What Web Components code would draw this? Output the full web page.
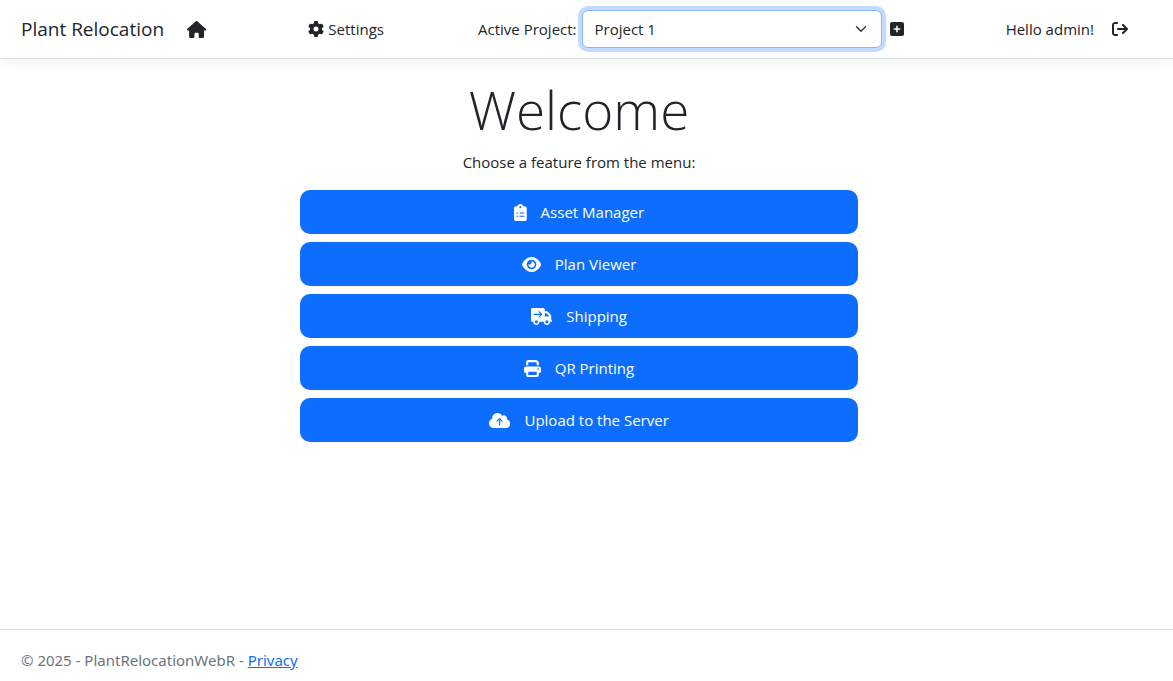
<!DOCTYPE html>
<html lang="en">
<head>
<meta charset="utf-8">
<meta name="viewport" content="width=device-width, initial-scale=1">
<title>Plant Relocation</title>
<style>
  body {
    margin: 0;
    background: #fff;
    color: #212529;
    font: 15px/24px "Segoe UI", "Open Sans", "Noto Sans", sans-serif;
  }
</style>
</head>
<body>
<pr-app></pr-app>

<template id="t-app">
  <style>
    :host { display: flex; flex-direction: column; min-height: 100vh; }
    pr-main { flex: 1; }
  </style>
  <pr-header></pr-header>
  <pr-main>
    <pr-feature icon="clipboard" href="#assets">Asset Manager</pr-feature>
    <pr-feature icon="eye" href="#plans">Plan Viewer</pr-feature>
    <pr-feature icon="truck" href="#shipping">Shipping</pr-feature>
    <pr-feature icon="print" href="#qr">QR Printing</pr-feature>
    <pr-feature icon="cloud" href="#upload">Upload to the Server</pr-feature>
  </pr-main>
  <pr-footer></pr-footer>
</template>

<template id="t-header">
  <style>
    :host {
      display: block;
      border-bottom: 1px solid #dee2e6;
      box-shadow: 0 4px 12px rgba(0, 0, 0, .05);
    }
    nav {
      display: flex;
      align-items: center;
      justify-content: space-between;
      padding: 10px 45px 10px 21px;
    }
    a { color: inherit; text-decoration: none; }
    .group { display: flex; align-items: center; }
    .brand { font-size: 19px; line-height: 30px; }
    .home { display: flex; padding: 0 8px 0 23px; }
    .home pr-icon { --icon-size: 17px; }
    .settings { display: flex; align-items: center; gap: 4px; }
    .user { gap: 18px; }
    label { margin-right: 5px; }
    select {
      appearance: none;
      box-sizing: border-box;
      width: 300px;
      height: 38px;
      margin: 0;
      padding: 0 36px 0 12px;
      border: 1px solid #86b7fe;
      border-radius: 6px;
      outline: 0;
      box-shadow: 0 0 0 4px rgba(13, 110, 253, .25);
      color: inherit;
      font: inherit;
      background: #fff url("data:image/svg+xml,%3Csvg xmlns='http://www.w3.org/2000/svg' viewBox='0 0 16 16'%3E%3Cpath fill='none' stroke='%23343a40' stroke-linecap='round' stroke-linejoin='round' stroke-width='2' d='m2 5 6 6 6-6'/%3E%3C/svg%3E") no-repeat right 14px center / 12px 12px;
    }
    button {
      display: flex;
      margin: 0;
      padding: 0 8px;
      border: 0;
      background: none;
      color: inherit;
      font: inherit;
    }
  </style>
  <nav>
    <div class="group">
      <a class="brand" href="#home">Plant Relocation</a>
      <a class="home" href="#home" aria-label="Home"><pr-icon name="home"></pr-icon></a>
    </div>
    <a class="settings" href="#settings"><pr-icon name="gear"></pr-icon><span>Settings</span></a>
    <div class="group">
      <label for="project">Active Project:</label>
      <select id="project"><option>Project 1</option></select>
      <button type="button" aria-label="Add project"><pr-icon name="plus"></pr-icon></button>
    </div>
    <div class="group user">
      <span>Hello admin!</span>
      <a class="group" href="#logout" aria-label="Log out"><pr-icon name="logout"></pr-icon></a>
    </div>
  </nav>
</template>

<template id="t-main">
  <style>
    :host { display: block; padding: 19px 15px 16px 0; text-align: center; }
    h1 { margin: 0 0 8px; font-size: 53px; line-height: 64px; font-weight: 300; }
    p { margin: 0 0 16px; }
    .menu {
      display: flex;
      flex-direction: column;
      gap: 8px;
      width: calc(50% - 21px);
      margin: 0 auto;
    }
  </style>
  <h1>Welcome</h1>
  <p>Choose a feature from the menu:</p>
  <div class="menu"><slot></slot></div>
</template>

<template id="t-feature">
  <style>
    :host { display: block; }
    a {
      display: flex;
      align-items: center;
      justify-content: center;
      gap: 14px;
      padding: 10px 16px;
      border-radius: 10px;
      background: #0d6efd;
      color: #fff;
      text-decoration: none;
    }
    pr-icon { --icon-size: 17px; }
  </style>
  <a><pr-icon></pr-icon><span><slot></slot></span></a>
</template>

<template id="t-footer">
  <style>
    :host {
      display: block;
      padding: 18px 21px 9px;
      border-top: 1px solid #dee2e6;
      color: #6c757d;
      font-family: "Segoe UI", "Noto Sans", sans-serif;
    }
    a { color: #0d6efd; }
  </style>
  <span>© 2025 - PlantRelocationWebR - <a href="#privacy">Privacy</a></span>
</template>

<script>
  const ICONS = {
    home: [576, "M575.8 255.5c0 18-15 32.1-32 32.1h-32l.7 160.2c0 2.7-.2 5.4-.5 8.1V472c0 22.1-17.9 40-40 40H456c-1.1 0-2.2 0-3.3-.1c-1.4 .1-2.8 .1-4.2 .1H416 392c-22.1 0-40-17.9-40-40V448 384c0-17.7-14.3-32-32-32H256c-17.7 0-32 14.3-32 32v64 24c0 22.1-17.9 40-40 40H160 128.1c-1.5 0-3-.1-4.5-.2c-1.2 .1-2.4 .2-3.6 .2H104c-22.1 0-40-17.9-40-40V360c0-.9 0-1.9 .1-2.8V287.6H32c-18 0-32-14-32-32.1c0-9 3-17 10-24L266.4 8c7-7 15-8 22-8s15 2 21 7L564.8 231.5c8 7 12 15 11 24z"],
    gear: [512, "M495.9 166.6c3.2 8.7 .5 18.4-6.4 24.6l-43.3 39.4c1.1 8.3 1.7 16.8 1.7 25.4s-.6 17.1-1.7 25.4l43.3 39.4c6.9 6.2 9.6 15.9 6.4 24.6c-4.4 11.9-9.7 23.3-15.8 34.3l-4.7 8.1c-6.6 11-14 21.4-22.1 31.2c-5.9 7.2-15.7 9.6-24.5 6.8l-55.7-17.7c-13.4 10.3-28.2 18.9-44 25.4l-12.5 57.1c-2 9.1-9 16.3-18.2 17.8c-13.8 2.3-28 3.5-42.5 3.5s-28.7-1.2-42.5-3.5c-9.2-1.5-16.2-8.7-18.2-17.8l-12.5-57.1c-15.8-6.5-30.6-15.1-44-25.4L83.1 425.9c-8.8 2.8-18.6 .3-24.5-6.8c-8.1-9.8-15.5-20.2-22.1-31.2l-4.7-8.1c-6.1-11-11.4-22.4-15.8-34.3c-3.2-8.7-.5-18.4 6.4-24.6l43.3-39.4C64.6 273.1 64 264.6 64 256s.6-17.1 1.7-25.4L22.4 191.2c-6.9-6.2-9.6-15.9-6.4-24.6c4.4-11.9 9.7-23.3 15.8-34.3l4.7-8.1c6.6-11 14-21.4 22.1-31.2c5.9-7.2 15.7-9.6 24.5-6.8l55.7 17.7c13.4-10.3 28.2-18.9 44-25.4l12.5-57.1c2-9.1 9-16.3 18.2-17.8C227.3 1.2 241.5 0 256 0s28.7 1.2 42.5 3.5c9.2 1.5 16.2 8.7 18.2 17.8l12.5 57.1c15.8 6.5 30.6 15.1 44 25.4l55.7-17.7c8.8-2.8 18.6-.3 24.5 6.8c8.1 9.8 15.5 20.2 22.1 31.2l4.7 8.1c6.1 11 11.4 22.4 15.8 34.3zM256 336a80 80 0 1 0 0-160 80 80 0 1 0 0 160z"],
    plus: [448, "M64 32C28.7 32 0 60.7 0 96V416c0 35.3 28.7 64 64 64H384c35.3 0 64-28.7 64-64V96c0-35.3-28.7-64-64-64H64zM200 344V280H136c-13.3 0-24-10.7-24-24s10.7-24 24-24h64V168c0-13.3 10.7-24 24-24s24 10.7 24 24v64h64c13.3 0 24 10.7 24 24s-10.7 24-24 24H248v64c0 13.3-10.7 24-24 24s-24-10.7-24-24z"],
    logout: [512, "M502.6 278.6c12.5-12.5 12.5-32.8 0-45.3l-128-128c-12.5-12.5-32.8-12.5-45.3 0s-12.5 32.8 0 45.3L402.7 224 192 224c-17.7 0-32 14.3-32 32s14.3 32 32 32l210.7 0-73.4 73.4c-12.5 12.5-12.5 32.8 0 45.3s32.8 12.5 45.3 0l128-128zM160 96c17.7 0 32-14.3 32-32s-14.3-32-32-32L96 32C43 32 0 75 0 128L0 384c0 53 43 96 96 96l64 0c17.7 0 32-14.3 32-32s-14.3-32-32-32l-64 0c-17.7 0-32-14.3-32-32l0-256c0-17.7 14.3-32 32-32l64 0z"],
    clipboard: [384, "M192 0c-41.8 0-77.4 26.7-90.5 64H64C28.7 64 0 92.7 0 128V448c0 35.3 28.7 64 64 64H320c35.3 0 64-28.7 64-64V128c0-35.3-28.7-64-64-64H282.5C269.4 26.7 233.8 0 192 0zm0 64a32 32 0 1 1 0 64 32 32 0 1 1 0-64zM72 272a24 24 0 1 1 48 0 24 24 0 1 1 -48 0zm104-16H304c8.8 0 16 7.2 16 16s-7.2 16-16 16H176c-8.8 0-16-7.2-16-16s7.2-16 16-16zM72 368a24 24 0 1 1 48 0 24 24 0 1 1 -48 0zm88 0c0-8.8 7.2-16 16-16H304c8.8 0 16 7.2 16 16s-7.2 16-16 16H176c-8.8 0-16-7.2-16-16z"],
    eye: [576, "M288 32c-80.8 0-145.5 36.8-192.6 80.6C48.6 156 17.3 208 2.5 243.7c-3.3 7.9-3.3 16.7 0 24.6C17.3 304 48.6 356 95.4 399.4C142.5 443.2 207.2 480 288 480s145.5-36.8 192.6-80.6c46.8-43.5 78.1-95.4 93-131.1c3.3-7.9 3.3-16.7 0-24.6c-14.9-35.7-46.2-87.7-93-131.1C433.5 68.8 368.8 32 288 32zM144 256a144 144 0 1 1 288 0 144 144 0 1 1 -288 0zm144-64c0 35.3-28.7 64-64 64c-7.1 0-13.9-1.2-20.3-3.3c-5.5-1.8-11.9 1.6-11.7 7.4c.3 6.9 1.3 13.8 3.2 20.7c13.7 51.2 66.4 81.6 117.6 67.9s81.6-66.4 67.9-117.6c-11.1-41.5-47.8-69.4-88.6-71.1c-5.8-.2-9.2 6.1-7.4 11.7c2.1 6.4 3.3 13.2 3.3 20.3z"],
    truck: [640, "M0 48C0 21.5 21.5 0 48 0H368c26.5 0 48 21.5 48 48V96h50.7c17 0 33.3 6.7 45.3 18.7L589.3 192c12 12 18.7 28.3 18.7 45.3V256v32 64c17.7 0 32 14.3 32 32s-14.3 32-32 32H576c0 53-43 96-96 96s-96-43-96-96H256c0 53-43 96-96 96s-96-43-96-96H48c-26.5 0-48-21.5-48-48V48zM416 256H544V237.3L466.7 160H416v96zM160 464a48 48 0 1 0 0-96 48 48 0 1 0 0 96zm368-48a48 48 0 1 0 -96 0 48 48 0 1 0 96 0zM252 100a17 17 0 0 0-24 24L279 175H96a17 17 0 0 0 0 34H279L228 260a17 17 0 0 0 24 24L332 204a17 17 0 0 0 0-24z"],
    print: [512, "M128 0C92.7 0 64 28.7 64 64v96h64V64H354.7L384 93.3V160h64V93.3c0-17-6.7-33.3-18.7-45.3L400 18.7C388 6.7 371.7 0 354.7 0H128zM384 352v32 64H128V384 368 352H384zm64 32h32c17.7 0 32-14.3 32-32V256c0-35.3-28.7-64-64-64H64c-35.3 0-64 28.7-64 64v96c0 17.7 14.3 32 32 32H64v64c0 35.3 28.7 64 64 64H384c35.3 0 64-28.7 64-64V384zM432 248a24 24 0 1 1 0 48 24 24 0 1 1 0-48z"],
    cloud: [640, "M144 480C64.5 480 0 415.5 0 336c0-62.8 40.2-116.2 96.2-135.9c-.1-2.7-.2-5.4-.2-8.1c0-88.4 71.6-160 160-160c59.3 0 111 32.2 138.7 80.2C409.9 102 428.3 96 448 96c53 0 96 43 96 96c0 12.2-2.3 23.8-6.4 34.6C596 238.4 640 290.1 640 352c0 70.7-57.3 128-128 128H144zM228 268a17 17 0 0 0 24 24L303 241V392a17 17 0 0 0 34 0V241L388 292a17 17 0 0 0 24-24L332 188a17 17 0 0 0-24 0z"]
  };

  class TemplateElement extends HTMLElement {
    constructor() {
      super();
      const template = document.getElementById(this.constructor.template);
      this.attachShadow({ mode: "open" }).append(template.content.cloneNode(true));
    }
  }

  class PrIcon extends HTMLElement {
    static observedAttributes = ["name"];
    constructor() {
      super();
      this.attachShadow({ mode: "open" });
    }
    attributeChangedCallback() {
      const [width, path] = ICONS[this.getAttribute("name")];
      this.shadowRoot.innerHTML = `
        <style>
          :host { display: inline-flex; }
          svg { display: block; height: var(--icon-size, 16px); width: auto; fill: currentColor; }
        </style>
        <svg viewBox="0 0 ${width} 512" aria-hidden="true"><path fill-rule="evenodd" d="${path}"/></svg>`;
    }
  }

  class PrFeature extends TemplateElement {
    static template = "t-feature";
    connectedCallback() {
      this.shadowRoot.querySelector("a").href = this.getAttribute("href");
      this.shadowRoot.querySelector("pr-icon").setAttribute("name", this.getAttribute("icon"));
    }
  }

  customElements.define("pr-icon", PrIcon);
  customElements.define("pr-feature", PrFeature);
  customElements.define("pr-header", class extends TemplateElement { static template = "t-header"; });
  customElements.define("pr-main", class extends TemplateElement { static template = "t-main"; });
  customElements.define("pr-footer", class extends TemplateElement { static template = "t-footer"; });
  customElements.define("pr-app", class extends TemplateElement { static template = "t-app"; });
</script>
</body>
</html>
